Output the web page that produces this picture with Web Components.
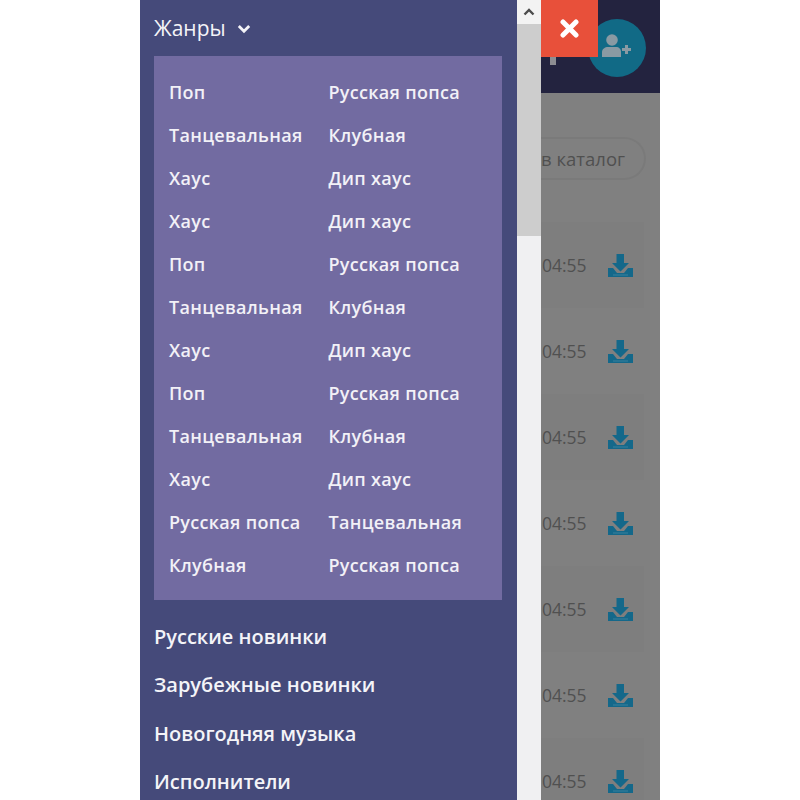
<!DOCTYPE html>
<html lang="ru">
<head>
<meta charset="utf-8">
<title>Меню</title>
<style>
  html, body { margin: 0; padding: 0; background: #fff; }
  body { font-family: "Open Sans", "Noto Sans", sans-serif; }
</style>
</head>
<body>
<app-frame>
  <side-menu slot="menu">
    <genre-panel></genre-panel>
    <menu-link>Русские новинки</menu-link>
    <menu-link>Зарубежные новинки</menu-link>
    <menu-link>Новогодняя музыка</menu-link>
    <menu-link>Исполнители</menu-link>
  </side-menu>
  <fake-scrollbar slot="scroll"></fake-scrollbar>
  <page-behind slot="page"></page-behind>
</app-frame>

<script>
const genres = [
  ['Поп', 'Русская попса'],
  ['Танцевальная', 'Клубная'],
  ['Хаус', 'Дип хаус'],
  ['Хаус', 'Дип хаус'],
  ['Поп', 'Русская попса'],
  ['Танцевальная', 'Клубная'],
  ['Хаус', 'Дип хаус'],
  ['Поп', 'Русская попса'],
  ['Танцевальная', 'Клубная'],
  ['Хаус', 'Дип хаус'],
  ['Русская попса', 'Танцевальная'],
  ['Клубная', 'Русская попса']
];

class AppFrame extends HTMLElement {
  constructor() {
    super();
    this.attachShadow({mode: 'open'});
    this.shadowRoot.innerHTML = `
    <style>
      :host {
        display: flex;
        width: 520px;
        height: 800px;
        margin: 0 auto;
        overflow: hidden;
      }
      ::slotted([slot="menu"]) { flex: 0 0 377px; }
      ::slotted([slot="scroll"]) { flex: 0 0 24px; }
      ::slotted([slot="page"]) { flex: 0 0 119px; }
    </style>
    <slot name="menu"></slot>
    <slot name="scroll"></slot>
    <slot name="page"></slot>
    `;
  }
}
customElements.define('app-frame', AppFrame);

class SideMenu extends HTMLElement {
  constructor() {
    super();
    this.attachShadow({mode: 'open'});
    this.shadowRoot.innerHTML = `
    <style>
      :host {
        display: block;
        box-sizing: border-box;
        height: 800px;
        padding: 0 14px;
        background: #454a7a;
        color: #f4f4f8;
        overflow: hidden;
      }
      #title {
        display: flex;
        align-items: center;
        gap: 11px;
        height: 56px;
        padding-bottom: 1px;
        box-sizing: border-box;
        font-size: 21px;
        font-weight: 500;
      }
      #title svg { margin-top: 2px; }
      #links { padding-top: 12px; }
    </style>
    <div id="title">
      <span>Жанры</span>
      <svg width="14" height="10" viewBox="0 0 14 10">
        <path d="M1.800 2 7 7.200 12.200 2" fill="none" stroke="#f4f4f8" stroke-width="2.800"/>
      </svg>
    </div>
    <slot name="panel"></slot>
    <div id="links"><slot></slot></div>
    `;
    this.querySelector('genre-panel').slot = 'panel';
  }
}
customElements.define('side-menu', SideMenu);

class GenrePanel extends HTMLElement {
  constructor() {
    super();
    this.attachShadow({mode: 'open'});
    const cells = genres.map(row =>
      `<span>${row[0]}</span><span>${row[1]}</span>`).join('');
    this.shadowRoot.innerHTML = `
    <style>
      :host {
        display: block;
        box-sizing: border-box;
        width: 348px;
        height: 544px;
        padding: 14px 0 0 15px;
        background: #726ba1;
        color: #f2f1f7;
      }
      #grid {
        display: grid;
        grid-template-columns: 159.500px 1fr;
        grid-auto-rows: 43px;
        align-items: center;
        font-size: 18px;
        letter-spacing: .3px;
        font-weight: 600;
        white-space: nowrap;
      }
    </style>
    <div id="grid">${cells}</div>
    `;
  }
}
customElements.define('genre-panel', GenrePanel);

class MenuLink extends HTMLElement {
  constructor() {
    super();
    this.attachShadow({mode: 'open'});
    this.shadowRoot.innerHTML = `
    <style>
      :host {
        display: flex;
        align-items: center;
        height: 48.500px;
        font-size: 20px;
        font-weight: 600;
        white-space: nowrap;
      }
    </style>
    <slot></slot>
    `;
  }
}
customElements.define('menu-link', MenuLink);

class FakeScrollbar extends HTMLElement {
  constructor() {
    super();
    this.attachShadow({mode: 'open'});
    this.shadowRoot.innerHTML = `
    <style>
      :host {
        display: flex;
        flex-direction: column;
        height: 800px;
        background: #f0f0f2;
      }
      #up {
        display: flex;
        align-items: center;
        justify-content: center;
        height: 24px;
        background: #f3f3f3;
      }
      #thumb { height: 212px; background: #cdcdcd; }
    </style>
    <div id="up">
      <svg width="12" height="8" viewBox="0 0 12 8">
        <path d="M1.500 6.500 6 2 10.500 6.500" fill="none" stroke="#4c4c4c" stroke-width="2.400"/>
      </svg>
    </div>
    <div id="thumb"></div>
    `;
  }
}
customElements.define('fake-scrollbar', FakeScrollbar);

class TrackRow extends HTMLElement {
  constructor() {
    super();
    this.attachShadow({mode: 'open'});
    this.shadowRoot.innerHTML = `
    <style>
      :host {
        display: flex;
        align-items: center;
        gap: 21px;
        box-sizing: border-box;
        height: 86px;
        padding-left: 1px;
        margin-right: 16px;
        color: #505050;
        font-size: 17.500px;
        background: #7e7e7e;
      }
      :host([plain]) { background: none; }
      svg { flex: none; }
    </style>
    <span>04:55</span>
    <svg width="25" height="23" viewBox="0 0 25 23">
      <path fill="#14688a" d="M8.500 0h7.500v9h5l-8.500 8.500L4 9h4.500z"/>
      <path fill="#14688a" d="M0 14h5l4 5h7l4-5h5v9H0z"/>
      <path fill="#5f9ab0" d="M5 20.500h15v1H5z" opacity=".5"/>
    </svg>
    `;
  }
}
customElements.define('track-row', TrackRow);

class PageBehind extends HTMLElement {
  constructor() {
    super();
    this.attachShadow({mode: 'open'});
    const rows = [1, 0, 1, 0, 1, 0, 1].map(on =>
      `<track-row ${on ? '' : 'plain'}></track-row>`).join('');
    this.shadowRoot.innerHTML = `
    <style>
      :host {
        display: block;
        position: relative;
        height: 800px;
        background: #808080;
        overflow: hidden;
      }
      #head {
        position: relative;
        height: 93px;
        background: #23233f;
      }
      #user {
        position: absolute;
        left: 47px;
        top: 19px;
        width: 58px;
        height: 58px;
        border-radius: 50%;
        background: #116a86;
        display: flex;
        align-items: center;
        justify-content: center;
      }
      #user svg { margin-top: -4px; }
      #stem {
        position: absolute;
        left: 9px;
        top: 57px;
        width: 6px;
        height: 8px;
        background: #8d8d92;
      }
      #close {
        position: absolute;
        left: 0;
        top: 0;
        width: 57px;
        height: 57px;
        background: #e8503a;
        display: flex;
        align-items: center;
        justify-content: center;
      }
      #search {
        display: flex;
        height: 129px;
        box-sizing: border-box;
        padding: 44px 14px 0 0;
      }
      #pill {
        flex: 1;
        height: 43px;
        box-sizing: border-box;
        display: flex;
        align-items: center;
        justify-content: flex-end;
        padding-right: 19px;
        border: 2px solid #7a7a7a;
        border-left: none;
        border-radius: 0 22px 22px 0;
        color: #505050;
        font-size: 18.500px;
        white-space: nowrap;
      }
    </style>
    <div id="head">
      <div id="stem"></div>
      <div id="user">
        <svg width="30" height="24" viewBox="0 0 30 24">
          <circle cx="10" cy="6" r="5.800" fill="#8a9aa3"/>
          <path fill="#8a9aa3" d="M0 23v-5c0-3 3-5 6-5h8c3 0 5 2 5 5v5z"/>
          <path fill="#8a9aa3" d="M20 14h3v-3h3v3h3v3h-3v3h-3v-3h-3z"/>
        </svg>
      </div>
    </div>
    <div id="close">
      <svg width="19" height="19" viewBox="0 0 19 19">
        <path d="M3 3 16 16M16 3 3 16" stroke="#fff" stroke-width="5" stroke-linecap="round"/>
      </svg>
    </div>
    <div id="search"><div id="pill">в каталог</div></div>
    ${rows}
    `;
  }
}
customElements.define('page-behind', PageBehind);
</script>
</body>
</html>
